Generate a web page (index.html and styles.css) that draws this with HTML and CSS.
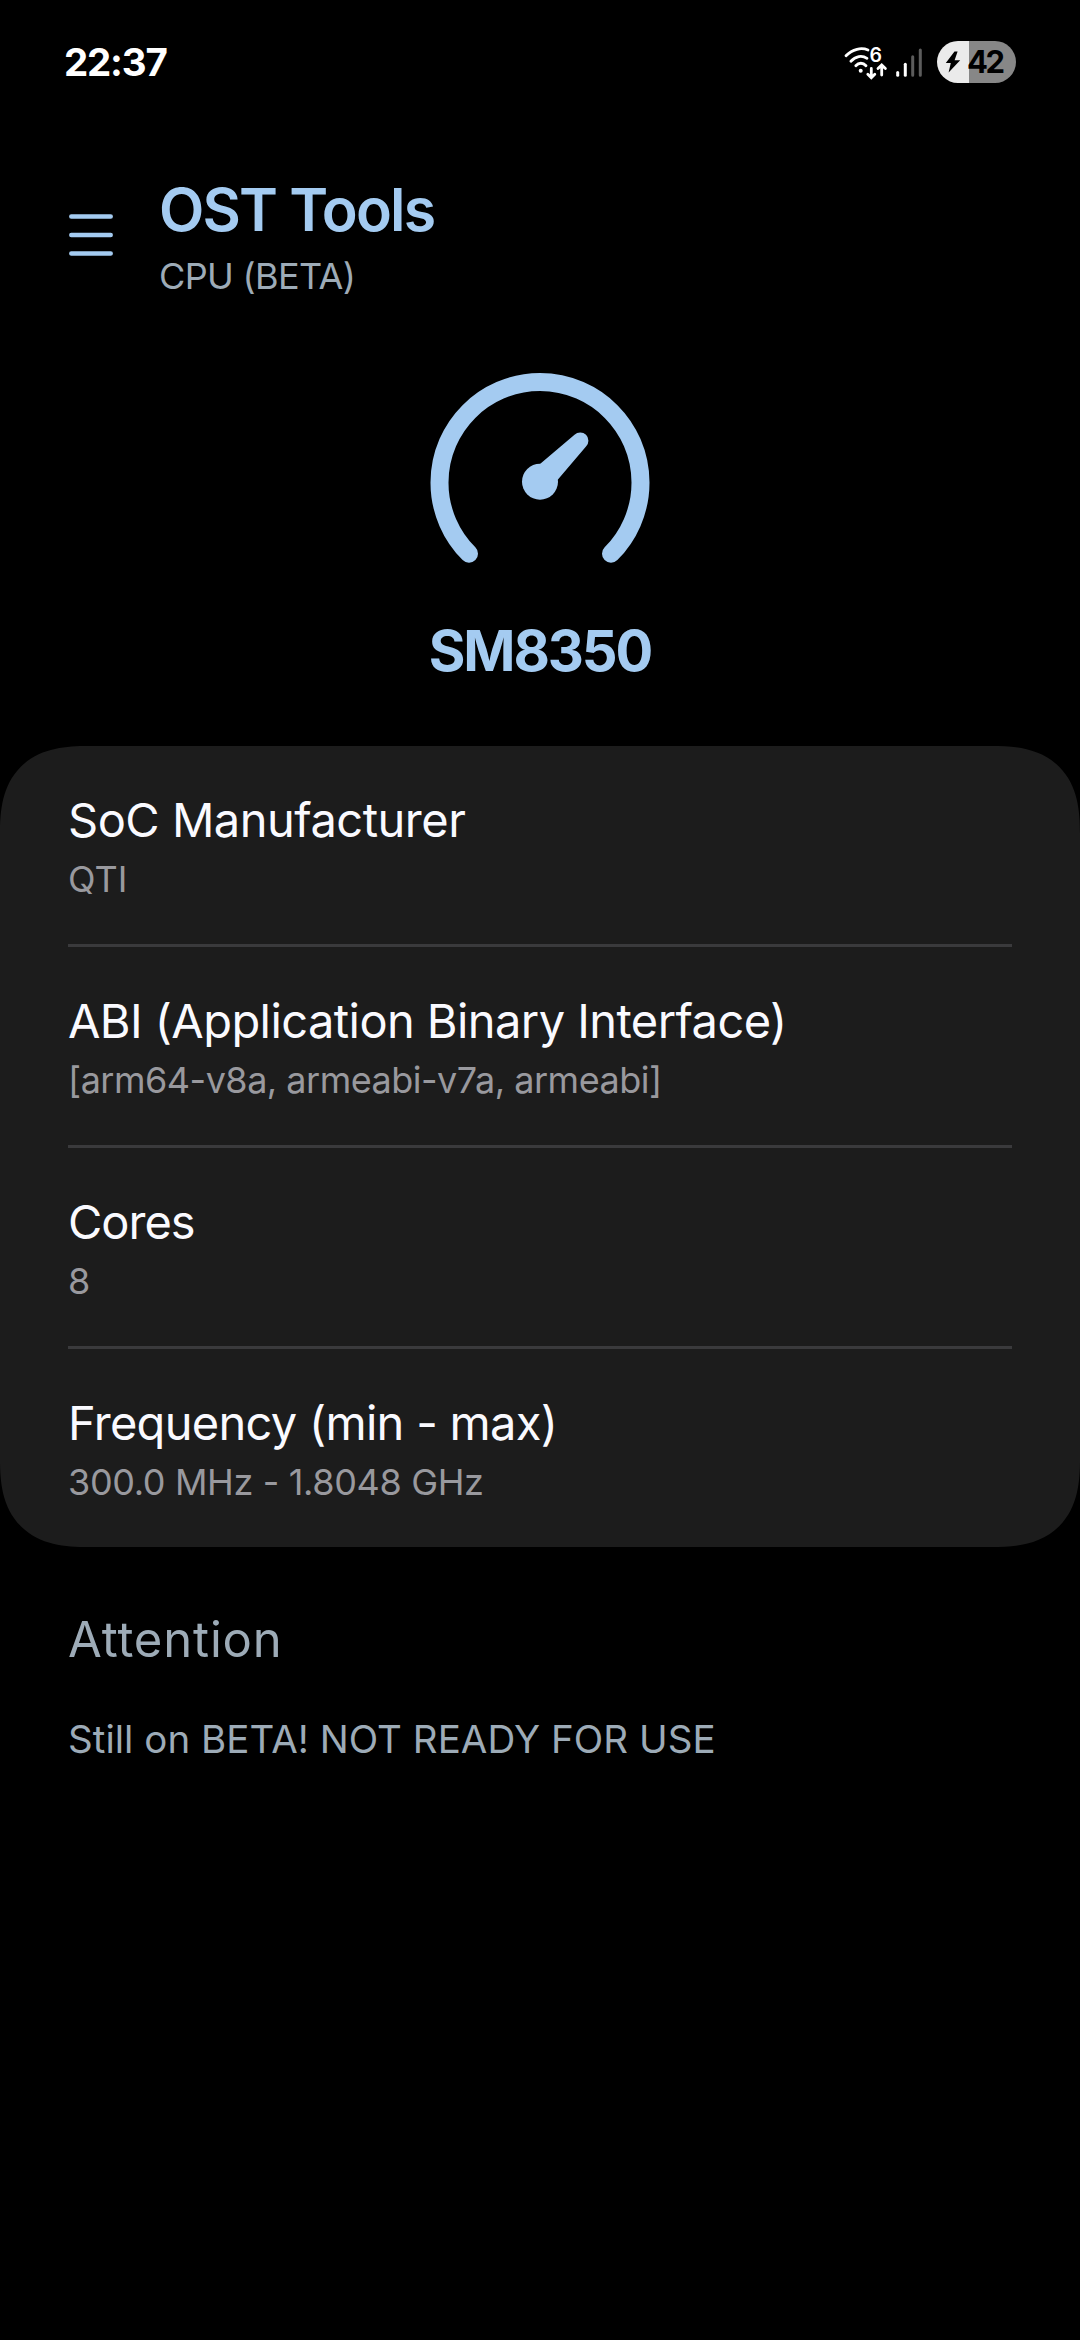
FILE: index.html
```html
<!DOCTYPE html>
<html lang="en">
<head>
<meta charset="utf-8">
<title>OST Tools</title>
<link rel="stylesheet" href="styles.css">
</head>
<body>
<div class="status-bar">
  <span class="clock">22:37</span>
  <div class="status-icons">
    <svg class="network" viewBox="0 0 84 42" width="84" height="42">
      <g fill="none" stroke="#fff" stroke-width="2.8" stroke-linecap="round">
        <path d="M4 14.800C10.500 7.800 19.500 6.300 26 9"/>
        <path d="M8.900 20.200C13.500 15 20 14 25 17.300"/>
        <path d="M13.800 24.800C16.800 21.400 21 21.400 24 24.800"/>
        <path d="M29.300 27.500V36.500M25.800 33.200L29.300 36.700L32.800 33.200"/>
        <path d="M39.700 34V24.300M36 27.600L39.700 24L43.400 27.600"/>
      </g>
      <g fill="none" stroke="#fff" stroke-width="3" stroke-linecap="round">
        <path d="M55.700 31.500V34.300"/>
        <path d="M63.300 23.300V34.300"/>
        <path d="M70.700 15.800V34.300M78.300 9V34.300" stroke="#5c5c5c"/>
      </g>
      <circle cx="18.700" cy="29.700" r="2" fill="#fff"/>
      <text class="wifi-gen" x="27.600" y="20.500">6</text>
    </svg>
    <div class="battery">
      <svg viewBox="0 0 16 22" width="16" height="22"><path d="M9.500 0.500L0.800 12H5.800L3.600 21.500L15.200 9.300H9.600L12.600 0.500Z" fill="#000"/></svg>
      <span class="battery-level">42</span>
    </div>
  </div>
</div>

<header class="app-bar">
  <svg class="menu" viewBox="0 0 44 44" width="44" height="44"><path d="M2.300 3.500H41.700M2.300 22H41.700M2.300 40.500H41.700" stroke="#a4cbf1" stroke-width="4.500" stroke-linecap="round"/></svg>
  <div class="heading">
    <h1 class="title">OST Tools</h1>
    <p class="subtitle">CPU (BETA)</p>
  </div>
</header>

<section class="hero">
  <svg viewBox="430 373 220 190" width="220" height="190">
    <path d="M469 553.700A100.500 100.500 0 1 1 611 553.700" fill="none" stroke="#a4cbf1" stroke-width="18" stroke-linecap="round"/>
    <circle cx="540" cy="481.700" r="18" fill="#a4cbf1"/>
    <path d="M540 464L574.500 434.800A8 8 0 0 1 586 446.400L557.500 480Z" fill="#a4cbf1"/>
  </svg>
  <h2 class="chip">SM8350</h2>
</section>

<main class="card">
  <div class="row manufacturer"><h3 class="name">SoC Manufacturer</h3><p class="value">QTI</p></div>
  <div class="row abi"><h3 class="name">ABI (Application Binary Interface)</h3><p class="value">[arm64-v8a, armeabi-v7a, armeabi]</p></div>
  <div class="row cores"><h3 class="name">Cores</h3><p class="value">8</p></div>
  <div class="row frequency"><h3 class="name">Frequency (min - max)</h3><p class="value">300.0 MHz - 1.8048 GHz</p></div>
</main>

<section class="notice">
  <h3 class="notice-title">Attention</h3>
  <p class="notice-text">Still on BETA! NOT READY FOR USE</p>
</section>
</body>
</html>
```
FILE: styles.css
```css
* { box-sizing: border-box; margin: 0; padding: 0; }
body {
  width: 1080px;
  height: 2340px;
  background: #000;
  color: #fafaff;
  font-family: Inter, "Liberation Sans", sans-serif;
  overflow: hidden;
}
h1, h2, h3, p { white-space: nowrap; }
svg { display: block; flex: none; }

.status-bar {
  display: flex;
  justify-content: space-between;
  align-items: flex-start;
  height: 174px;
  padding: 38px 64px 0 64px;
}
.clock { font-size: 38.5px; line-height: 48px; font-weight: 700; color: #fff; letter-spacing: -1.2px; }
.status-icons { display: flex; gap: 11px; padding-top: 3px; }
.wifi-gen { font-size: 19.5px; font-weight: 600; fill: #fff; }
.battery {
  display: flex;
  align-items: center;
  width: 79px;
  height: 42px;
  padding-left: 8px;
  border-radius: 21px;
  background: linear-gradient(to right, #ebebeb 32px, #878787 32px);
}
.battery-level { margin-left: 6px; color: #000; font-size: 31px; line-height: 42px; font-weight: 700; letter-spacing: -2.5px; }

.app-bar { display: flex; gap: 46px; height: 199px; padding-left: 69px; }
.menu { margin-top: 39px; }
.heading { padding-top: 1px; }
.title { margin-bottom: 7px; font-size: 59px; line-height: 70px; font-weight: 600; color: #a4cbf1; letter-spacing: -1.8px; }
.subtitle { font-size: 36px; line-height: 48px; color: #9dabb7; letter-spacing: -0.65px; }

.hero { display: flex; flex-direction: column; align-items: center; height: 373px; }
.chip { margin-top: 54px; font-size: 56px; line-height: 68px; font-weight: 700; color: #a4cbf1; letter-spacing: -2.1px; }

.card { height: 801px; background: #1c1c1c; border-radius: 72px; padding: 0 68px; }
@supports (corner-shape: superellipse(1.36)) {
  .card { border-radius: 88px; corner-shape: superellipse(1.36); }
}
.row { height: 201px; padding-top: 44px; border-bottom: 3px solid #3a3a3c; }
.row:last-child { border-bottom: 0; }
.name { margin-bottom: 5px; font-size: 47px; line-height: 60px; font-weight: 400; letter-spacing: -0.5px; }
.value { font-size: 36px; line-height: 48px; color: #99999e; }
.abi .name { letter-spacing: -0.57px; }
.abi .value { letter-spacing: -0.5px; }
.cores .name { letter-spacing: -1px; }
.frequency .name { letter-spacing: -0.7px; }
.frequency .value { letter-spacing: -0.35px; }

.notice { padding: 63px 68px 0; color: #9dabb7; }
.notice-title { margin-bottom: 44px; font-size: 49px; line-height: 60px; font-weight: 400; letter-spacing: 0.85px; }
.notice-text { font-size: 38.5px; line-height: 50px; letter-spacing: 0.04px; }
```
